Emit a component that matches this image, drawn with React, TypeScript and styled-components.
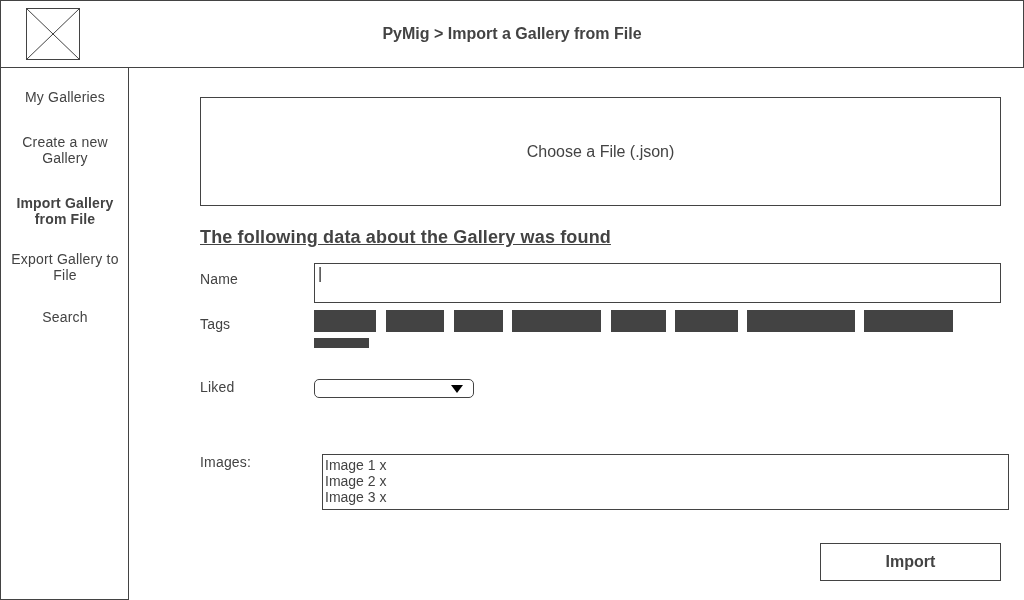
import React from 'react';
import styled, { createGlobalStyle } from 'styled-components';

const ink = '#434343';

const GlobalStyle = createGlobalStyle`
  *, *::before, *::after { box-sizing: border-box; }
  body { margin: 0; background: #fff; color: ${ink}; font-family: "Liberation Sans", Arial, sans-serif; overflow: hidden; }
`;

const Page = styled.div`
  display: flex;
  flex-direction: column;
  width: 1024px;
  height: 600px;
  will-change: transform;
`;

const Header = styled.header`
  display: grid;
  grid-template-columns: 80px 1fr 80px;
  align-items: center;
  height: 68px;
  border: 1px solid ${ink};
  flex: none;
`;

const Logo = styled.svg`
  display: block;
  width: 54px;
  height: 52px;
  margin-left: 25px;
`;

const Title = styled.h1`
  margin: 0;
  font-size: 16px;
  line-height: 18px;
  text-align: center;
`;

const Body = styled.div`
  display: flex;
  flex: 1;
`;

const Sidebar = styled.nav`
  display: flex;
  flex-direction: column;
  width: 129px;
  padding: 21px 0 0 1px;
  border: 1px solid ${ink};
  border-top: 0;
`;

const NavItem = styled.a<{ $gap: number; $active?: boolean }>`
  margin-bottom: ${p => p.$gap}px;
  font-size: 14px;
  line-height: 16px;
  letter-spacing: ${p => (p.$active ? '0.15px' : '0.18px')};
  font-weight: ${p => (p.$active ? 700 : 400)};
  text-align: center;
`;

const Main = styled.main`
  display: flex;
  flex-direction: column;
  width: 801px;
  margin-left: 71px;
  padding-top: 29px;
`;

const DropZone = styled.div`
  display: flex;
  align-items: center;
  justify-content: center;
  height: 109px;
  border: 1px solid ${ink};
  font-size: 16px;
`;

const Heading = styled.h2`
  align-self: flex-start;
  margin: 20px 0 15px;
  font-size: 18px;
  line-height: 22px;
  letter-spacing: 0.15px;
  text-decoration: underline;
`;

const Row = styled.div<{ $height: number }>`
  display: grid;
  grid-template-columns: 114px 687px;
  align-items: start;
  height: ${p => p.$height}px;
`;

const Label = styled.label<{ $top: number }>`
  padding-top: ${p => p.$top}px;
  font-size: 14px;
  line-height: 16px;
  letter-spacing: 0.18px;
`;

const NameField = styled.div`
  height: 40px;
  padding: 3px 4px;
  border: 1px solid ${ink};
`;

const Caret = styled.div`
  width: 2px;
  height: 15px;
  background: linear-gradient(90deg, #8a8a8a 50%, #606060 50%);
`;

const Tags = styled.div`
  display: flex;
  flex-wrap: wrap;
  row-gap: 6px;
  padding-top: 2px;
`;

const Tag = styled.span<{ $width: number; $gap: number; $small?: boolean }>`
  width: ${p => p.$width}px;
  height: ${p => (p.$small ? 10 : 22)}px;
  margin-right: ${p => p.$gap}px;
  background: ${ink};
`;

const Select = styled.div`
  display: flex;
  align-items: center;
  justify-content: flex-end;
  width: 160px;
  height: 19px;
  padding-right: 10px;
  border: 1px solid ${ink};
  border-radius: 5px;
`;

const ImageList = styled.ul`
  width: 687px;
  height: 56px;
  margin: 0 0 0 8px;
  padding: 2px;
  border: 1px solid ${ink};
  list-style: none;
  font-size: 14px;
  line-height: 16px;
`;

const ImportButton = styled.button`
  align-self: flex-end;
  width: 181px;
  height: 38px;
  padding: 0;
  border: 1px solid ${ink};
  background: transparent;
  color: ${ink};
  font: bold 16px "Liberation Sans", Arial, sans-serif;
`;

const tags = [
  [62, 10], [58, 10], [49, 9], [89, 10], [55, 9], [63, 9], [108, 9], [89, 40],
];

export default function App() {
  return (
    <Page>
      <GlobalStyle />
      <Header>
        <Logo viewBox="0 0 54 52" fill="none" stroke={ink}>
          <rect x="0.5" y="0.5" width="53" height="51" />
          <path d="M0.5 0.5L53.5 51.5M53.5 0.5L0.5 51.5" />
        </Logo>
        <Title>PyMig &gt; Import a Gallery from File</Title>
      </Header>
      <Body>
        <Sidebar>
          <NavItem $gap={29}>My Galleries</NavItem>
          <NavItem $gap={29}>Create a new<br />Gallery</NavItem>
          <NavItem $gap={24} $active>Import Gallery<br />from File</NavItem>
          <NavItem $gap={26}>Export Gallery to<br />File</NavItem>
          <NavItem $gap={0}>Search</NavItem>
        </Sidebar>
        <Main>
          <DropZone>Choose a File (.json)</DropZone>
          <Heading>The following data about the Gallery was found</Heading>
          <Row $height={45}>
            <Label $top={8}>Name</Label>
            <NameField><Caret /></NameField>
          </Row>
          <Row $height={71}>
            <Label $top={8}>Tags</Label>
            <Tags>
              {tags.map(([width, gap], i) => <Tag key={i} $width={width} $gap={gap} />)}
              <Tag $width={55} $gap={0} $small />
            </Tags>
          </Row>
          <Row $height={75}>
            <Label $top={0}>Liked</Label>
            <Select>
              <svg width="12" height="8" viewBox="0 0 12 8"><path d="M0 0H12L6 8Z" fill="#000" /></svg>
            </Select>
          </Row>
          <Row $height={89}>
            <Label $top={0}>Images:</Label>
            <ImageList>
              <li>Image 1 x</li>
              <li>Image 2 x</li>
              <li>Image 3 x</li>
            </ImageList>
          </Row>
          <ImportButton>Import</ImportButton>
        </Main>
      </Body>
    </Page>
  );
}
